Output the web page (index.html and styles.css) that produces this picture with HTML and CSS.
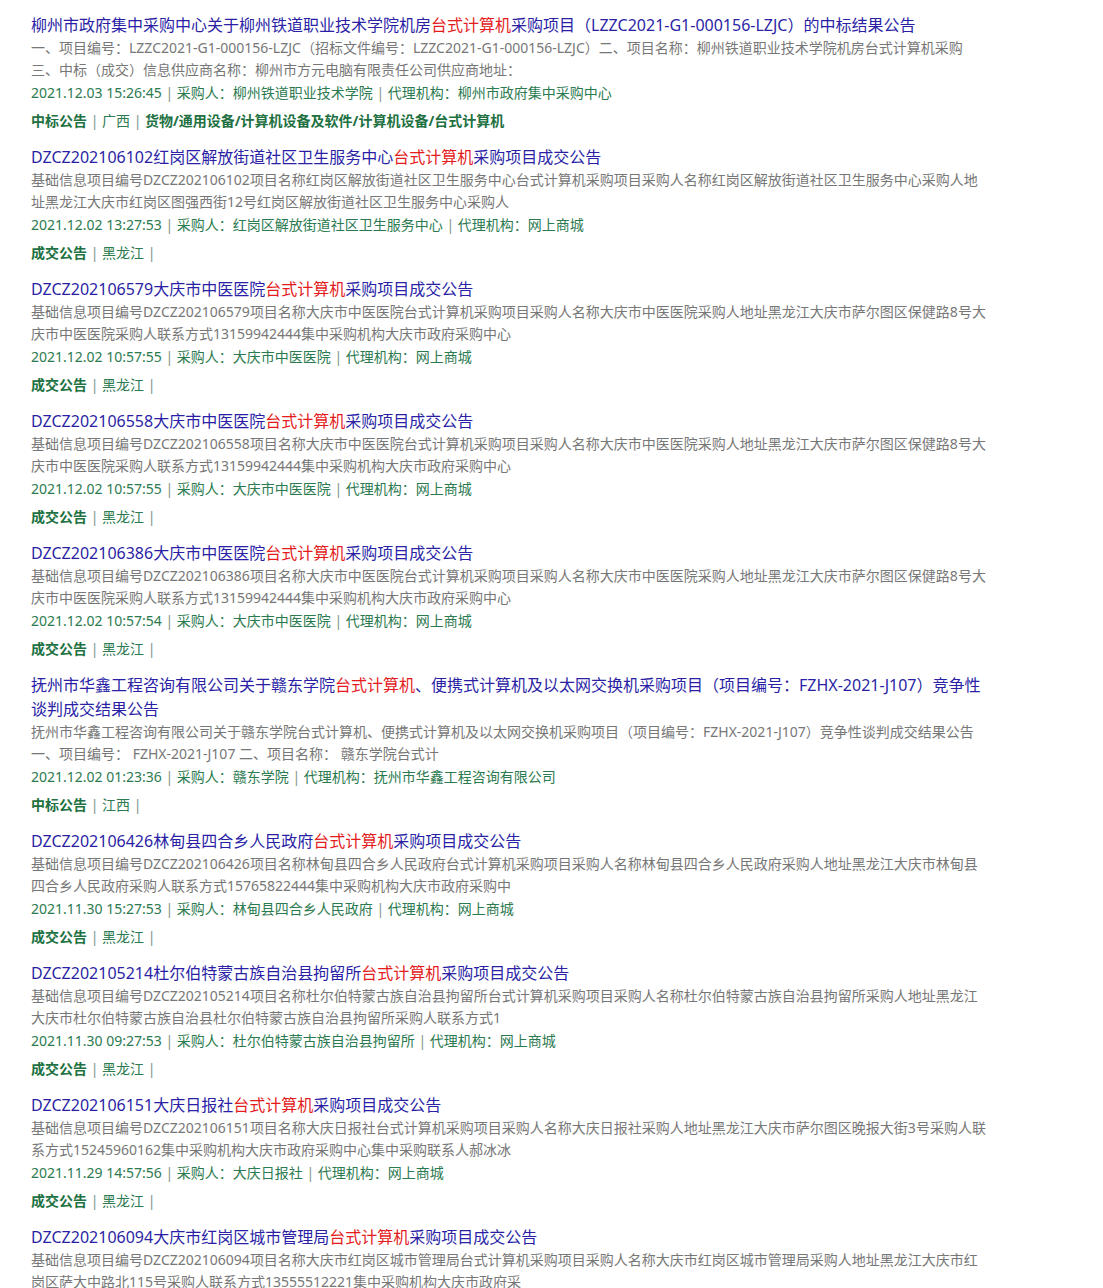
FILE: index.html
```html
<!DOCTYPE html>
<html lang="zh-CN">
<head>
<meta charset="utf-8">
<title>台式计算机 采购公告</title>
<link rel="stylesheet" href="styles.css">
</head>
<body>
<ul class="list">
  <li class="item">
    <a class="title" href="#">柳州市政府集中采购中心关于柳州铁道职业技术学院机房<em>台式计算机</em>采购项目（LZZC2021-G1-000156-LZJC）的中标结果公告</a>
    <p class="desc">一、项目编号：LZZC2021-G1-000156-LZJC（招标文件编号：LZZC2021-G1-000156-LZJC）二、项目名称：柳州铁道职业技术学院机房台式计算机采购 三、中标（成交）信息供应商名称：柳州市方元电脑有限责任公司供应商地址：</p>
    <p class="meta">2021.12.03 15:26:45 <span class="sep">|</span> 采购人：柳州铁道职业技术学院 <span class="sep">|</span> 代理机构：柳州市政府集中采购中心</p>
    <p class="tags"><b>中标公告</b> <span class="sep">|</span> 广西 <span class="sep">|</span> <b>货物/通用设备/计算机设备及软件/计算机设备/台式计算机</b></p>
  </li>
  <li class="item">
    <a class="title" href="#">DZCZ202106102红岗区解放街道社区卫生服务中心<em>台式计算机</em>采购项目成交公告</a>
    <p class="desc">基础信息项目编号DZCZ202106102项目名称红岗区解放街道社区卫生服务中心台式计算机采购项目采购人名称红岗区解放街道社区卫生服务中心采购人地址黑龙江大庆市红岗区图强西街12号红岗区解放街道社区卫生服务中心采购人</p>
    <p class="meta">2021.12.02 13:27:53 <span class="sep">|</span> 采购人：红岗区解放街道社区卫生服务中心 <span class="sep">|</span> 代理机构：网上商城</p>
    <p class="tags"><b>成交公告</b> <span class="sep">|</span> 黑龙江 <span class="sep">|</span></p>
  </li>
  <li class="item">
    <a class="title" href="#">DZCZ202106579大庆市中医医院<em>台式计算机</em>采购项目成交公告</a>
    <p class="desc">基础信息项目编号DZCZ202106579项目名称大庆市中医医院台式计算机采购项目采购人名称大庆市中医医院采购人地址黑龙江大庆市萨尔图区保健路8号大庆市中医医院采购人联系方式13159942444集中采购机构大庆市政府采购中心</p>
    <p class="meta">2021.12.02 10:57:55 <span class="sep">|</span> 采购人：大庆市中医医院 <span class="sep">|</span> 代理机构：网上商城</p>
    <p class="tags"><b>成交公告</b> <span class="sep">|</span> 黑龙江 <span class="sep">|</span></p>
  </li>
  <li class="item">
    <a class="title" href="#">DZCZ202106558大庆市中医医院<em>台式计算机</em>采购项目成交公告</a>
    <p class="desc">基础信息项目编号DZCZ202106558项目名称大庆市中医医院台式计算机采购项目采购人名称大庆市中医医院采购人地址黑龙江大庆市萨尔图区保健路8号大庆市中医医院采购人联系方式13159942444集中采购机构大庆市政府采购中心</p>
    <p class="meta">2021.12.02 10:57:55 <span class="sep">|</span> 采购人：大庆市中医医院 <span class="sep">|</span> 代理机构：网上商城</p>
    <p class="tags"><b>成交公告</b> <span class="sep">|</span> 黑龙江 <span class="sep">|</span></p>
  </li>
  <li class="item">
    <a class="title" href="#">DZCZ202106386大庆市中医医院<em>台式计算机</em>采购项目成交公告</a>
    <p class="desc">基础信息项目编号DZCZ202106386项目名称大庆市中医医院台式计算机采购项目采购人名称大庆市中医医院采购人地址黑龙江大庆市萨尔图区保健路8号大庆市中医医院采购人联系方式13159942444集中采购机构大庆市政府采购中心</p>
    <p class="meta">2021.12.02 10:57:54 <span class="sep">|</span> 采购人：大庆市中医医院 <span class="sep">|</span> 代理机构：网上商城</p>
    <p class="tags"><b>成交公告</b> <span class="sep">|</span> 黑龙江 <span class="sep">|</span></p>
  </li>
  <li class="item">
    <a class="title" href="#">抚州市华鑫工程咨询有限公司关于赣东学院<em>台式计算机</em>、便携式计算机及以太网交换机采购项目（项目编号：FZHX-2021-J107）竞争性谈判成交结果公告</a>
    <p class="desc">抚州市华鑫工程咨询有限公司关于赣东学院台式计算机、便携式计算机及以太网交换机采购项目（项目编号：FZHX-2021-J107）竞争性谈判成交结果公告 一、项目编号： FZHX-2021-J107 二、项目名称： 赣东学院台式计</p>
    <p class="meta">2021.12.02 01:23:36 <span class="sep">|</span> 采购人：赣东学院 <span class="sep">|</span> 代理机构：抚州市华鑫工程咨询有限公司</p>
    <p class="tags"><b>中标公告</b> <span class="sep">|</span> 江西 <span class="sep">|</span></p>
  </li>
  <li class="item">
    <a class="title" href="#">DZCZ202106426林甸县四合乡人民政府<em>台式计算机</em>采购项目成交公告</a>
    <p class="desc">基础信息项目编号DZCZ202106426项目名称林甸县四合乡人民政府台式计算机采购项目采购人名称林甸县四合乡人民政府采购人地址黑龙江大庆市林甸县四合乡人民政府采购人联系方式15765822444集中采购机构大庆市政府采购中</p>
    <p class="meta">2021.11.30 15:27:53 <span class="sep">|</span> 采购人：林甸县四合乡人民政府 <span class="sep">|</span> 代理机构：网上商城</p>
    <p class="tags"><b>成交公告</b> <span class="sep">|</span> 黑龙江 <span class="sep">|</span></p>
  </li>
  <li class="item">
    <a class="title" href="#">DZCZ202105214杜尔伯特蒙古族自治县拘留所<em>台式计算机</em>采购项目成交公告</a>
    <p class="desc">基础信息项目编号DZCZ202105214项目名称杜尔伯特蒙古族自治县拘留所台式计算机采购项目采购人名称杜尔伯特蒙古族自治县拘留所采购人地址黑龙江大庆市杜尔伯特蒙古族自治县杜尔伯特蒙古族自治县拘留所采购人联系方式1</p>
    <p class="meta">2021.11.30 09:27:53 <span class="sep">|</span> 采购人：杜尔伯特蒙古族自治县拘留所 <span class="sep">|</span> 代理机构：网上商城</p>
    <p class="tags"><b>成交公告</b> <span class="sep">|</span> 黑龙江 <span class="sep">|</span></p>
  </li>
  <li class="item">
    <a class="title" href="#">DZCZ202106151大庆日报社<em>台式计算机</em>采购项目成交公告</a>
    <p class="desc">基础信息项目编号DZCZ202106151项目名称大庆日报社台式计算机采购项目采购人名称大庆日报社采购人地址黑龙江大庆市萨尔图区晚报大街3号采购人联系方式15245960162集中采购机构大庆市政府采购中心集中采购联系人郝冰冰</p>
    <p class="meta">2021.11.29 14:57:56 <span class="sep">|</span> 采购人：大庆日报社 <span class="sep">|</span> 代理机构：网上商城</p>
    <p class="tags"><b>成交公告</b> <span class="sep">|</span> 黑龙江 <span class="sep">|</span></p>
  </li>
  <li class="item">
    <a class="title" href="#">DZCZ202106094大庆市红岗区城市管理局<em>台式计算机</em>采购项目成交公告</a>
    <p class="desc">基础信息项目编号DZCZ202106094项目名称大庆市红岗区城市管理局台式计算机采购项目采购人名称大庆市红岗区城市管理局采购人地址黑龙江大庆市红岗区萨大中路北115号采购人联系方式13555512221集中采购机构大庆市政府采</p>
  </li>
</ul>
</body>
</html>
```

FILE: styles.css
```css
html, body {
  margin: 0;
  padding: 0;
  background: #ffffff;
}

body {
  font-family: "Noto Sans", "Noto Sans CJK SC", sans-serif;
  font-size: 14px;
  color: #666666;
}

.list {
  list-style: none;
  margin: 0;
  padding: 13px 0 0 31px;
  width: 958px;
  display: flex;
  flex-direction: column;
  gap: 12px;
}

.item {
  display: flex;
  flex-direction: column;
}

.title {
  font-size: 16px;
  line-height: 24px;
  color: #2b1fa6;
  text-decoration: none;
}

.title em {
  font-style: normal;
  color: #e41c1c;
}

.desc {
  margin: 0;
  font-size: 14px;
  line-height: 22px;
  color: #777777;
}

.meta {
  margin: 0;
  font-size: 14px;
  line-height: 24px;
  color: #2c7a50;
}

.tags {
  margin: 4px 0 0;
  font-size: 14px;
  line-height: 24px;
  color: #2c7a50;
}

.tags b {
  font-weight: bold;
  color: #21703f;
}

.sep {
  color: #7f9488;
}
```
